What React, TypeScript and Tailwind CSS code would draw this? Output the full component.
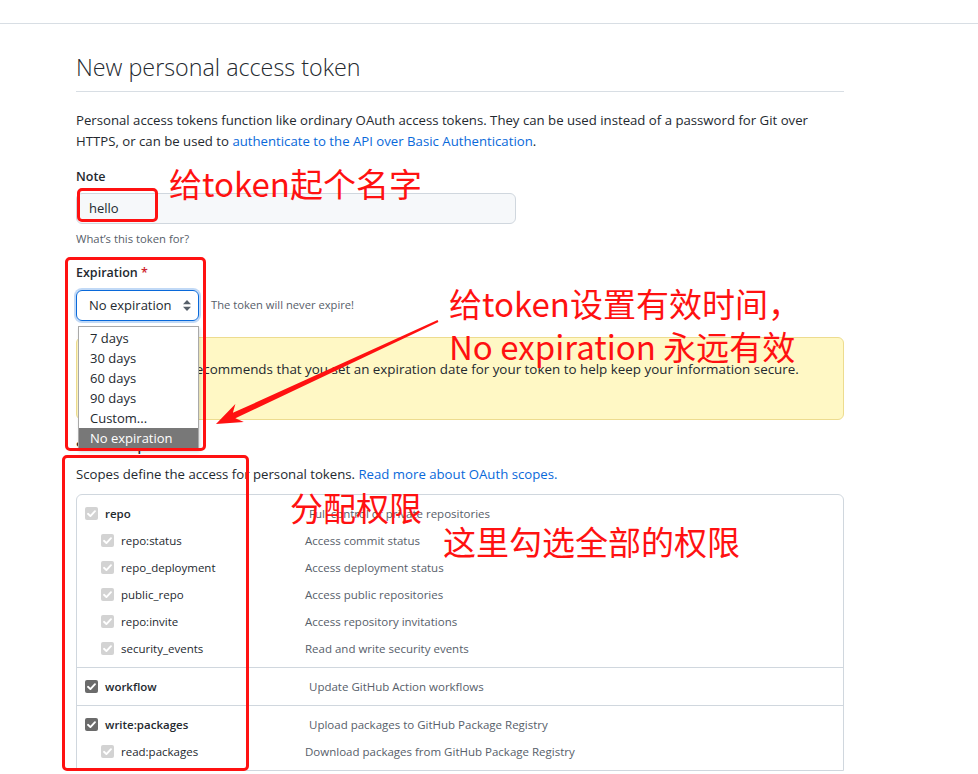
import React from "react";

type Scope = { name: string; desc: string; sub?: boolean; strong?: boolean };

const groups: Scope[][] = [
  [
    { name: "repo", desc: "Full control of private repositories", strong: true },
    { name: "repo:status", desc: "Access commit status", sub: true },
    { name: "repo_deployment", desc: "Access deployment status", sub: true },
    { name: "public_repo", desc: "Access public repositories", sub: true },
    { name: "repo:invite", desc: "Access repository invitations", sub: true },
    { name: "security_events", desc: "Read and write security events", sub: true },
  ],
  [{ name: "workflow", desc: "Update GitHub Action workflows", strong: true }],
  [
    { name: "write:packages", desc: "Upload packages to GitHub Package Registry", strong: true },
    { name: "read:packages", desc: "Download packages from GitHub Package Registry", sub: true },
  ],
];

function Check({ dark }: { dark?: boolean }) {
  return (
    <svg width="13" height="13" viewBox="0 0 13 13" className="shrink-0">
      <rect x="0" y="0" width="13" height="13" rx="2" fill={dark ? "#6b6b6b" : "#d3d3d3"} />
      <path d="M3 6.8 L5.4 9.1 L10 4.2" stroke="#fff" strokeWidth="1.9" fill="none" strokeLinecap="round" strokeLinejoin="round" />
    </svg>
  );
}

function ScopeRow({ s }: { s: Scope }) {
  return (
    <div className={`flex h-[27px] items-center ${s.sub ? "pl-[24px]" : "pl-[8px]"}`}>
      <Check dark={!s.sub && s.name !== "repo"} />
      <span
        className={`ml-[7px] text-[11.5px] text-[#24292f] ${s.strong ? "font-semibold" : ""} ${
          s.sub ? "w-[184px]" : "w-[204px]"
        }`}
      >
        {s.name}
      </span>
      <span className="text-[11.5px] text-[#57606a]">{s.desc}</span>
    </div>
  );
}

function Annot({ className, children }: { className: string; children: React.ReactNode }) {
  return (
    <div
      className={`absolute whitespace-nowrap text-[33px] leading-none text-[#ff1111] font-['Noto_Sans_CJK_SC','Noto_Sans',sans-serif] ${className}`}
    >
      {children}
    </div>
  );
}

export default function App() {
  return (
    <div className="relative h-[774px] w-[978px] overflow-hidden bg-white text-[#24292f] font-['Open_Sans','Noto_Sans',sans-serif]">
      <div className="h-[24px] border-b border-[#d8dee4]" />

      <div className="ml-[76px] w-[768px]">
        <h1 className="mt-[25px] border-b border-[#d8dee4] pb-[6px] text-[23.3px] font-light leading-[36px]">
          New personal access token
        </h1>

        <p className="mt-[18px] text-[13.2px] leading-[21px]">
          Personal access tokens function like ordinary OAuth access tokens. They can be used instead of a password for Git over
          <br />
          HTTPS, or can be used to <span className="text-[#0969da]">authenticate to the API over Basic Authentication</span>.
        </p>

        <div className="mt-[15px] text-[12.5px] font-semibold leading-[20px]">Note</div>
        <div className="mt-[6px] flex h-[31px] w-[440px] items-center rounded-md border border-[#d0d7de] bg-[#f6f8fa] pl-[12px] text-[13px]">
          hello
        </div>
        <div className="mt-[6px] text-[11.3px] leading-[18px] text-[#57606a]">What’s this token for?</div>

        <div className="mt-[15px] text-[12.5px] font-semibold leading-[20px]">
          Expiration <span className="text-[#cf222e]">*</span>
        </div>
        <div className="mt-[7px] flex items-center">
          <div className="flex h-[31px] w-[123px] items-center justify-between rounded-md border border-[#0969da] pl-[12px] pr-[7px] text-[13px] shadow-[0_0_0_2px_rgba(9,105,218,0.25)]">
            <span>No expiration</span>
            <svg width="8" height="11" viewBox="0 0 8 11">
              <path d="M4 0 L8 4.3 L0 4.3 Z M0 6.7 L8 6.7 L4 11 Z" fill="#57606a" />
            </svg>
          </div>
          <span className="ml-[12px] text-[11.2px] text-[#57606a]">The token will never expire!</span>
        </div>

        <div className="mt-[16px] h-[83px] rounded-md border border-[#eddc8f] bg-[#fff8c5] px-[12px] pt-[21px] text-[13.4px] leading-[21px]">
          GitHub strongly recommends that you set an expiration date for your token to help keep your information secure.
        </div>

        <div className="mt-[16px] text-[13px] font-semibold leading-[20px]">Select scopes</div>
        <p className="mt-[8px] text-[13.2px] leading-[20px]">
          Scopes define the access for personal tokens. <span className="text-[#0969da]">Read more about OAuth scopes.</span>
        </p>

        <div className="mt-[10px] rounded-t-md border border-[#d0d7de]">
          {groups.map((g, i) => (
            <div key={i} className={`py-[5px] ${i > 0 ? "border-t border-[#d0d7de]" : ""}`}>
              {g.map((s) => (
                <ScopeRow key={s.name} s={s} />
              ))}
            </div>
          ))}
        </div>
      </div>

      {/* open select list */}
      <div className="absolute left-[78px] top-[326px] w-[121px] border border-[#a9a9a9] bg-white py-px text-[13px] leading-[20px] shadow-[1px_2px_3px_rgba(0,0,0,0.15)]">
        {["7 days", "30 days", "60 days", "90 days", "Custom..."].map((o) => (
          <div key={o} className="px-[11px]">
            {o}
          </div>
        ))}
        <div className="bg-[#787878] px-[11px] text-white">No expiration</div>
      </div>

      {/* annotation boxes */}
      <div className="absolute left-[77px] top-[188px] h-[34px] w-[81px] rounded-[5px] border-[3px] border-[#ff1111]" />
      <div className="absolute left-[65px] top-[257px] h-[194px] w-[141px] rounded-[5px] border-[3px] border-[#ff1111]" />
      <div className="absolute left-[62px] top-[455px] h-[316px] w-[187px] rounded-[5px] border-[3px] border-[#ff1111]" />

      <svg className="absolute left-0 top-0" width="978" height="774" viewBox="0 0 978 774">
        <polygon
          points="438.42,321.91 235.40,418.30 243.79,422.12 216,424 235.37,403.98 232.88,412.86 437.58,320.09"
          fill="#ff1111"
        />
      </svg>

      <Annot className="left-[169px] top-[167px]">给token起个名字</Annot>
      <Annot className="left-[449px] top-[287px]">给token设置有效时间，</Annot>
      <Annot className="left-[449px] top-[330px]">No expiration 永远有效</Annot>
      <Annot className="left-[290px] top-[491px]">分配权限</Annot>
      <Annot className="left-[443px] top-[525px]">这里勾选全部的权限</Annot>
    </div>
  );
}
